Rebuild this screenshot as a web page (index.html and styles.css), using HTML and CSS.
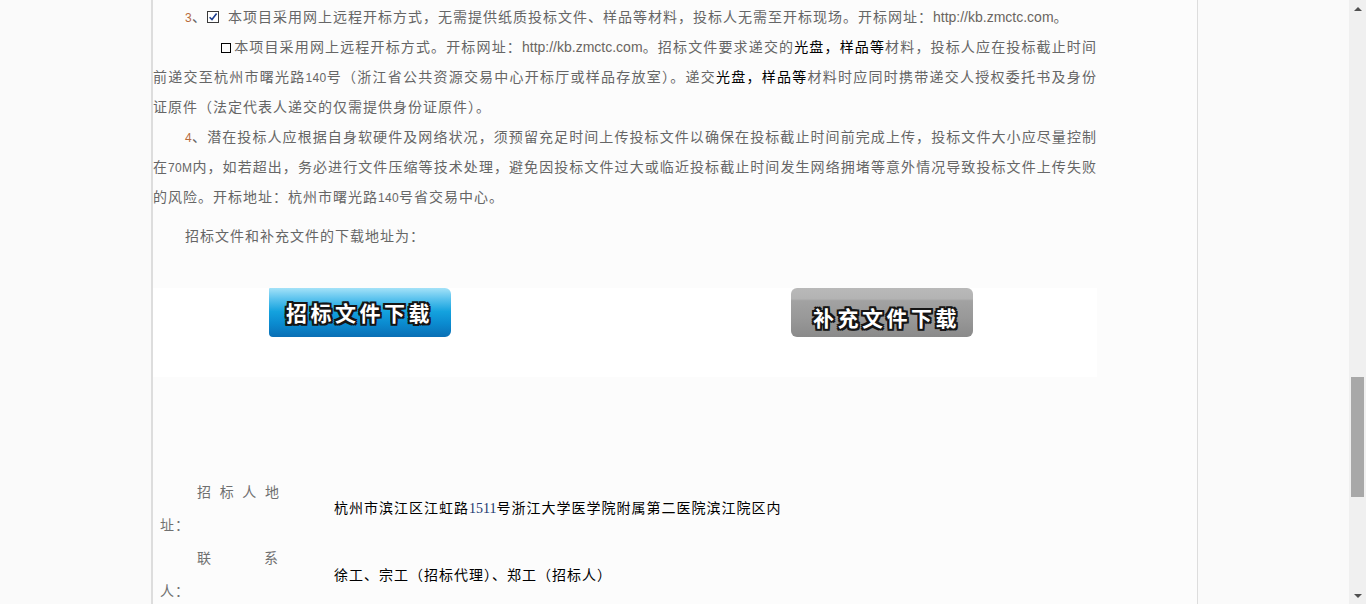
FILE: index.html
```html
<!DOCTYPE html>
<html lang="zh-CN">
<head>
    <meta charset="UTF-8">
    <title>招标公告</title>
    <link rel="stylesheet" href="styles.css">
</head>
<body>
    <div class="viewport">
        <div class="page">
            <div class="article">
                <p class="para">
                    <span class="line first"><span class="num lead">3</span>、<svg class="check" width="12" height="12" viewBox="0 0 12 12"><rect x="0.5" y="0.5" width="11" height="11" fill="#fff" stroke="#3b3b3b"/><path d="M2.6 6.2 L5 8.6 L9.6 2.6" fill="none" stroke="#1d3e8f" stroke-width="1.6"/></svg>本项目采用网上远程开标方式，无需提供纸质投标文件、样品等材料，投标人无需至开标现场。开标网址：<span class="url">http://kb.zmctc.com</span>。</span>
                </p>

                <p class="para">
                    <span class="line jl box-line"><span class="box"></span>本项目采用网上远程开标方式。开标网址：<span class="url">http://kb.zmctc.com</span>。招标文件要求递交的<span class="dark">光盘，样品等</span>材料，投标人应在投标截止时间</span>
                    <span class="line jl">前递交至杭州市曙光路<span class="num">140</span>号（浙江省公共资源交易中心开标厅或样品存放室）。递交<span class="dark">光盘，样品等</span>材料时应同时携带递交人授权委托书及身份</span>
                    <span class="line">证原件（法定代表人递交的仅需提供身份证原件）。</span>
                </p>

                <p class="para">
                    <span class="line jl first"><span class="num lead">4</span>、潜在投标人应根据自身软硬件及网络状况，须预留充足时间上传投标文件以确保在投标截止时间前完成上传，投标文件大小应尽量控制</span>
                    <span class="line jl">在<span class="num">70M</span>内，如若超出，务必进行文件压缩等技术处理，避免因投标文件过大或临近投标截止时间发生网络拥堵等意外情况导致投标文件上传失败</span>
                    <span class="line">的风险。开标地址：杭州市曙光路<span class="num">140</span>号省交易中心。</span>
                </p>

                <p class="para download-title">
                    <span class="line first">招标文件和补充文件的下载地址为：</span>
                </p>

                <div class="downloads">
                    <div class="dl-cell">
                        <a class="btn btn-blue" href="#">招标文件下载</a>
                    </div>
                    <div class="dl-cell">
                        <a class="btn btn-gray" href="#">补充文件下载</a>
                    </div>
                </div>

                <div class="info">
                    <div class="info-row">
                        <div class="info-label">招 标 人 地 址：</div>
                        <div class="info-value">杭州市滨江区江虹路<span class="serif-num">1511</span>号浙江大学医学院附属第二医院滨江院区内</div>
                    </div>
                    <div class="info-row">
                        <div class="info-label">联<span class="gap"></span>系 人：</div>
                        <div class="info-value">徐工、宗工（招标代理）、郑工（招标人）</div>
                    </div>
                </div>
            </div>
        </div>
    </div>

    <div class="scrollbar">
        <div class="arrow arrow-up"></div>
        <div class="track">
            <div class="thumb"></div>
        </div>
        <div class="arrow arrow-down"></div>
    </div>
</body>
</html>
```

FILE: styles.css
```css
* {
    margin: 0;
    padding: 0;
    box-sizing: border-box;
}

html,
body {
    height: 100%;
}

body {
    display: flex;
    overflow: hidden;
    background: #fafafa;
    font-family: "Noto Sans CJK SC", "Noto Sans", sans-serif;
    font-size: 14px;
    color: #666;
}

.viewport {
    flex: 1;
}

.page {
    width: 1047px;
    height: 100%;
    margin: 0 auto;
    background: #fcfcfc;
    border-left: 2px solid #dddddd;
    border-right: 1px solid #dddddd;
}

.article {
    width: 944px;
    padding-top: 1px;
    letter-spacing: 1px;
    line-height: 30px;
}

.line {
    display: block;
    height: 30px;
}

.line.first {
    padding-left: 32px;
}

.line.box-line {
    padding-left: 68px;
}

.jl {
    white-space: nowrap;
    text-align: justify;
    text-align-last: justify;
}

.num {
    font-family: "Liberation Sans", sans-serif;
    font-size: 12px;
    letter-spacing: 0.3px;
}

.num.lead {
    color: #b86b3c;
}

.url {
    font-family: "Liberation Sans", sans-serif;
    letter-spacing: 0;
    color: #6a6560;
}

.dark {
    color: #000;
}

.check {
    vertical-align: -1px;
    margin-right: 9px;
}

.box {
    display: inline-block;
    width: 10px;
    height: 10px;
    border: 1.5px solid #000;
    margin-right: 3px;
    vertical-align: -1px;
}

.download-title {
    margin-top: 9px;
}

/* download buttons */
.downloads {
    display: grid;
    grid-template-columns: 472px 472px;
    height: 89px;
    margin-top: 38px;
    background: #fff;
}

.dl-cell:first-child {
    padding-left: 116px;
}

.dl-cell:last-child {
    padding-left: 166px;
}

.btn {
    display: flex;
    align-items: center;
    width: 182px;
    height: 49px;
    color: #fff;
    font-size: 21px;
    font-weight: bold;
    letter-spacing: 3.5px;
    line-height: 1;
    text-decoration: none;
    text-shadow:
        -2px -2px 0 #151515,
        2px -2px 0 #151515,
        -2px 2px 0 #151515,
        2px 2px 0 #151515,
        0 -2px 0 #151515,
        0 2px 0 #151515,
        -2px 0 0 #151515,
        2px 0 0 #151515;
}

.btn-blue {
    padding-left: 17px;
    border-radius: 1px 6px 6px 4px;
    background: linear-gradient(#a4e2f8 0%, #5cc3ee 22%, #14a2de 48%, #0b8bd0 72%, #0a6fb5 100%);
}

.btn-gray {
    padding-left: 22px;
    padding-top: 9px;
    border-radius: 6px;
    background: linear-gradient(#b9b9b9 0%, #b3b3b3 22%, #a2a2a2 26%, #999 60%, #8a8a8a 100%);
}

/* contact rows */
.info {
    margin-top: 98px;
    letter-spacing: 1px;
}

.info-row {
    display: grid;
    grid-template-columns: 181px 1fr;
    align-items: center;
}

.info-label {
    width: 142px;
    padding-left: 7px;
    text-indent: 37px;
    line-height: 33px;
    height: 66px;
    word-spacing: 3.5px;
    color: #707070;
}

.gap {
    display: inline-block;
    width: 52px;
}

.info-value {
    color: #000;
}

.serif-num {
    font-family: "Liberation Serif", serif;
    letter-spacing: 0;
    color: #22386e;
}

/* fake browser scrollbar */
.scrollbar {
    width: 17px;
    height: 100%;
    display: flex;
    flex-direction: column;
    background: #f0f0f0;
}

.arrow {
    height: 17px;
    display: flex;
    justify-content: center;
    align-items: center;
}

.arrow::after {
    content: "";
    border-left: 4px solid transparent;
    border-right: 4px solid transparent;
}

.arrow-up::after {
    border-bottom: 4px solid #505050;
}

.arrow-down::after {
    border-top: 4px solid #505050;
}

.track {
    flex: 1;
    padding: 360px 2px 0;
}

.thumb {
    height: 120px;
    background: #a8a8a8;
}
```
